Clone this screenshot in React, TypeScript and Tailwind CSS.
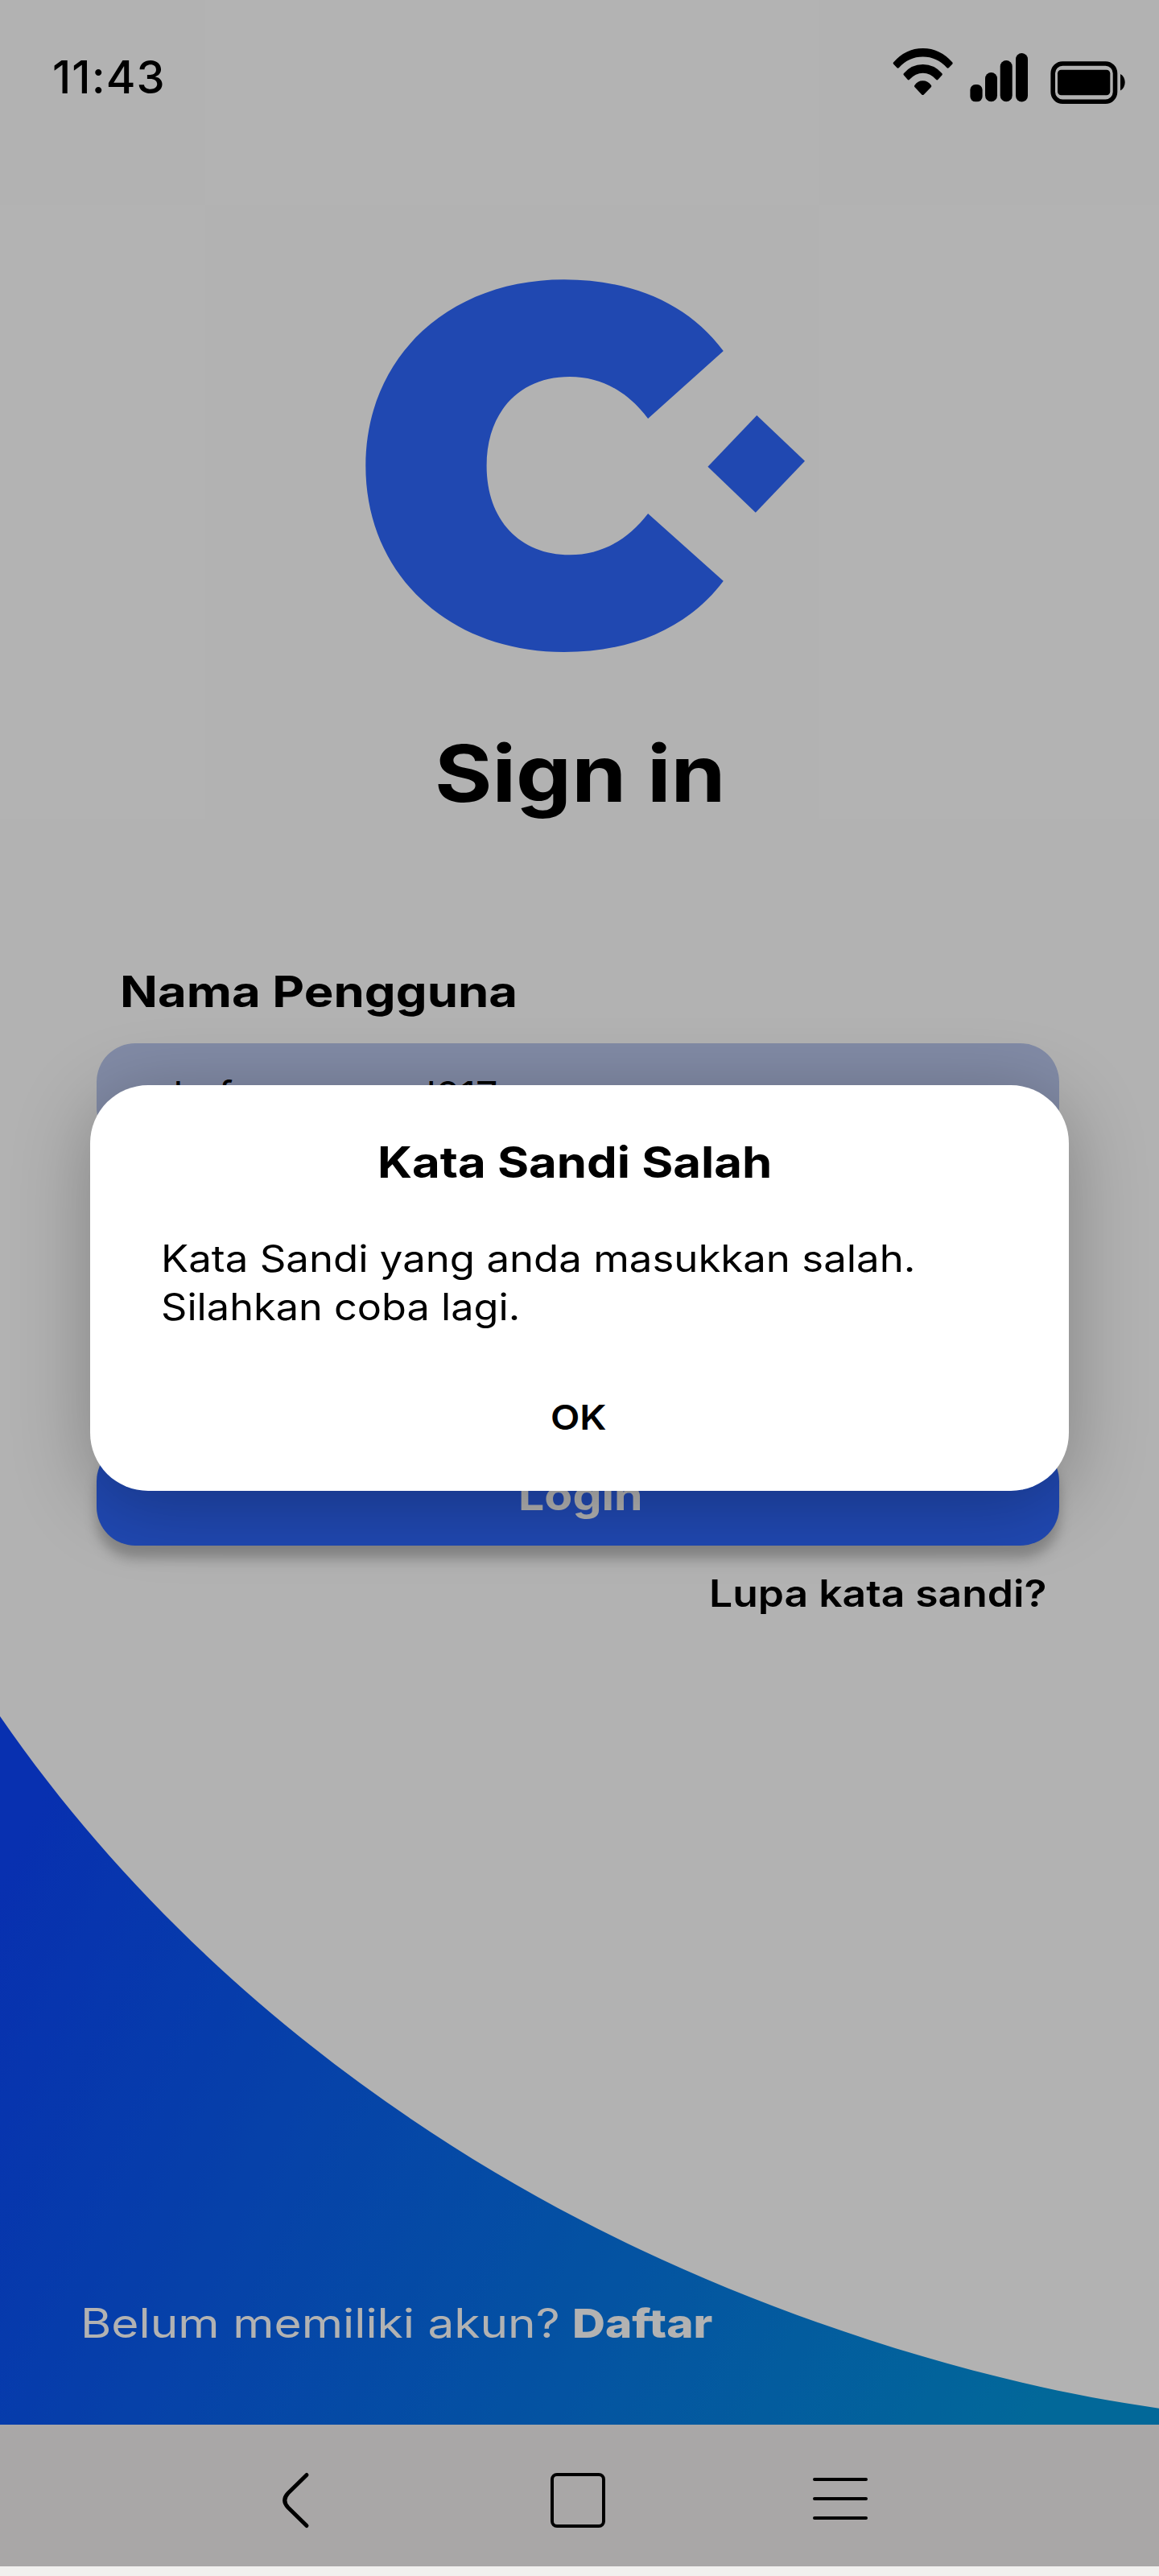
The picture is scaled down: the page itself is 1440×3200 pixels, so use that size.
import React from 'react';

function WifiIcon() {
  return (
    <svg className="absolute left-[1108px] top-[58px]" width="78" height="62" viewBox="1108 58 78 62">
      <path d="M1110 77.6Q1125 60 1146.7 60Q1168 60 1183.4 77.6Q1184 78.6 1183.4 79.5L1179 84Q1177.6 85.4 1176.3 84Q1164 70.5 1146.7 70.5Q1129 70.5 1117 84Q1115.6 85.4 1114.3 84L1110 79.5Q1109.2 78.6 1110 77.6Z" />
      <path d="M1122.8 91.3Q1132 80 1146.7 80Q1161 80 1170.5 91.3Q1171.2 92.3 1170.5 93.2L1165.5 98.8Q1164.2 100 1163 98.8Q1156 90.8 1146.7 90.8Q1137.5 90.8 1130 98.8Q1128.8 100 1127.6 98.8L1122.8 93.2Q1122 92.3 1122.8 91.3Z" />
      <path d="M1136.3 106Q1140 100.3 1146.5 100.3Q1153 100.3 1157 106Q1157.6 107 1157 108L1147.8 117.4Q1146.5 118.6 1145.2 117.4L1136.3 108Q1135.6 107 1136.3 106Z" />
    </svg>
  );
}

function SignalIcon() {
  return (
    <svg className="absolute left-[1204px] top-[64px]" width="74" height="64" viewBox="1204 64 74 64">
      <rect x="1205.4" y="105" width="15.2" height="21.3" rx="6.5" />
      <rect x="1224" y="90" width="15" height="36.3" rx="7.5" />
      <rect x="1242.7" y="75" width="15" height="51.3" rx="7.5" />
      <rect x="1262" y="66" width="15" height="60.5" rx="7.5" />
    </svg>
  );
}

function BatteryIcon() {
  return (
    <svg className="absolute left-[1304px] top-[74px]" width="96" height="58" viewBox="1304 74 96 58">
      <rect x="1308.2" y="79" width="77.3" height="47.2" rx="12" fill="none" stroke="#000" strokeWidth="5.6" />
      <rect x="1314" y="86.8" width="65.3" height="31.4" rx="4.5" />
      <path d="M1392 92C1399.6 96 1399.6 108.5 1392 112.5Z" />
    </svg>
  );
}

function Logo() {
  return (
    <svg className="ml-[454px] mt-[187px] block shrink-0" width="547" height="464" viewBox="454 347 547 464" fill="#2f68fe">
      <path d="M898.8 436C855 377 785 347.3 700.7 347.3C558 347.3 454.3 443 454.3 578.7C454.3 714 558 810 700.7 810C785 810 855 780 898.8 721.7L805.1 638C779 672 746 689.3 707.9 689.3C646 689.3 604.6 646 604.6 578.7C604.6 511 646 468 707.9 468C746 468 779 485.5 805.1 520Z" />
      <path d="M940.3 516L1000 572.8L938.8 636.7L879.4 579.8Z" />
    </svg>
  );
}

function Wave() {
  return (
    <svg className="absolute left-0 top-[2112px]" width="1440" height="900" viewBox="0 2112 1440 900">
      <defs>
        <linearGradient id="sea" gradientUnits="userSpaceOnUse" x1="0" y1="2330" x2="1310" y2="2980">
          <stop offset="0" stopColor="#0c45fc" />
          <stop offset="1" stopColor="#0396dc" />
        </linearGradient>
      </defs>
      <path fill="url(#sea)" d="M0 2132C200 2422 470 2627 720 2757C940 2872 1210 2960 1440 2991.7V3012H0Z" />
    </svg>
  );
}

export default function App() {
  return (
    <div className="relative h-[3200px] w-[1440px] overflow-hidden bg-[#f1f0ee] font-['Inter',sans-serif] text-black">
      <div className="relative flex h-[3188px] flex-col bg-white">
        <Wave />
        <header className="h-[160px] shrink-0 pl-[65px] pt-[60px]">
          <div className="text-[56px] font-medium leading-[72px] tracking-[1.1px]">11:43</div>
          <WifiIcon />
          <SignalIcon />
          <BatteryIcon />
        </header>

        <Logo />

        <h1 className="ml-[540px] mt-[90px] w-max origin-left scale-x-[1.126] text-[97px] font-bold leading-[120px]">Sign in</h1>

        <label className="ml-[149px] mt-[171px] w-max origin-left scale-x-[1.141] text-[54px] font-bold leading-[80px]">Nama Pengguna</label>
        <div className="ml-[120px] mt-[24px] flex h-[128px] w-[1196px] shrink-0 items-center rounded-[48px] bg-[#bac8ee] pl-[70px]">
          <span className="origin-left scale-x-[1.03] text-[47px] leading-[60px]">shafamuanmad217</span>
        </div>

        <button className="ml-[120px] mt-[368px] flex h-[128px] w-[1196px] shrink-0 items-center justify-center rounded-[48px] bg-[#2f68fe] pl-[7px] pt-[4px] shadow-[0_16px_16px_rgba(0,0,0,0.25)]">
          <span className="scale-x-[1.1] text-[52px] font-bold leading-[64px] text-white">Login</span>
        </button>
        <a className="ml-[881px] mt-[29px] w-max origin-left scale-x-[1.122] text-[46px] font-semibold leading-[60px]">Lupa kata sandi?</a>

        <p className="relative ml-[100px] mt-[847px] flex text-[50px] leading-[60px] text-white">
          <span className="w-[611px] origin-left scale-x-[1.172] whitespace-nowrap">Belum memiliki akun?</span>
          <b className="origin-left scale-x-[1.134] font-extrabold">Daftar</b>
        </p>

        <nav className="mt-auto h-[176px] shrink-0 bg-[#f3f0f0]">
          <svg className="block" width="1440" height="176" viewBox="0 3012 1440 176" fill="none" stroke="#000" strokeWidth="4" strokeLinecap="round" strokeLinejoin="round">
            <path strokeWidth="5" d="M381 3074.500L358 3097Q349.500 3106 358 3115L381 3137.500" />
            <rect x="686" y="3074" width="64" height="64" rx="6" />
            <path d="M1012 3080H1076M1012 3104H1076M1012 3128H1076" />
          </svg>
        </nav>
      </div>

      <div className="absolute inset-x-0 top-0 h-[3188px] bg-black/30">
        <section className="ml-[112px] mt-[1348px] flex h-[504px] w-[1216px] flex-col rounded-[72px] bg-white pt-[56px] shadow-[0_16px_96px_rgba(0,0,0,0.27)]">
          <h2 className="ml-[357px] w-max origin-left scale-x-[1.108] text-[54px] font-bold leading-[80px]">Kata Sandi Salah</h2>
          <p className="ml-[88px] mt-[49px] flex w-max flex-col text-[46px] leading-[60px]">
            <span className="origin-left scale-x-[1.107]">Kata Sandi yang anda masukkan salah.</span>
            <span className="origin-left scale-x-[1.097]">Silahkan coba lagi.</span>
          </p>
          <button className="ml-[572px] mt-[77px] w-max origin-left scale-x-[1.1] text-[43px] font-semibold leading-[60px]">OK</button>
        </section>
      </div>
    </div>
  );
}
